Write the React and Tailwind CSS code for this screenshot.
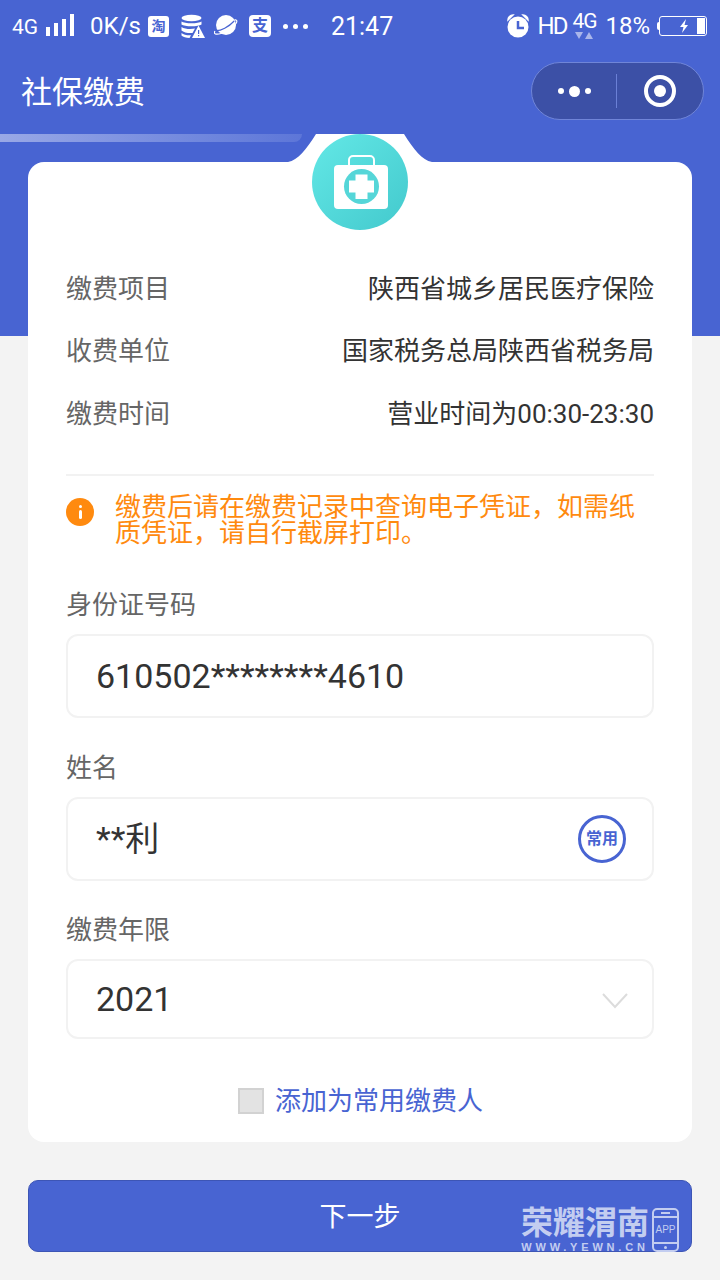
import React from 'react';

const BLUE = '#4864d2';

const StatusBar = () => (
  <div className="flex items-center h-[50px] pt-[2px] pl-[12px] pr-[13px] text-white text-[24px] font-['Roboto','Noto_Sans_CJK_SC',sans-serif] font-light">
    <span className="text-[21px] font-normal mt-[3px]">4G</span>
    <div className="flex items-end gap-[4px] h-[22px] ml-[8px] mb-[2px]">
      <span className="w-[4px] h-[9px] bg-white" />
      <span className="w-[4px] h-[13px] bg-white" />
      <span className="w-[4px] h-[17px] bg-white" />
      <span className="w-[4px] h-[22px] bg-white" />
    </div>
    <span className="ml-[16px] text-[24px] font-normal">0K/s</span>
    <div className="w-[21px] h-[21px] ml-[7px] bg-white rounded-[3px] flex items-center justify-center text-[14px] font-bold text-[#4864d2] leading-none overflow-hidden">淘</div>
    <svg className="ml-[12px]" width="24" height="24" viewBox="0 0 24 24" fill="white">
      <ellipse cx="10.5" cy="4" rx="10" ry="3.2" />
      <path d="M.5 7.5c3 2.4 17 2.4 20 0v3c-3 2.4-17 2.4-20 0zM.5 13c3 2.2 10 2.4 13.5 1.5L11.500 19c-4 .4-9-.5-11-2.500zM.5 19c2 1.800 6 2.600 9.500 2.300L8.500 24C5 24 2 23 .5 21.500z" />
      <path d="M17.500 11.500L24 24H11z" />
      <rect x="17" y="16" width="1.200" height="4" fill="#4864d2" />
      <rect x="17" y="21" width="1.200" height="1.300" fill="#4864d2" />
    </svg>
    <svg className="ml-[9px]" width="24" height="24" viewBox="0 0 24 24" fill="white">
      <circle cx="12" cy="11" r="10" />
      <path d="M1 17c-2 3 1 4 6 2.500 5-1.300 12-5.500 15-10 1.500-2.500 1-3.500-1.500-3.800" fill="none" stroke="white" strokeWidth="1.200" />
      <path d="M1.200 16.500c5 1 14-4 19-9.500" fill="none" stroke="#4864d2" strokeWidth="1.200" />
    </svg>
    <div className="w-[22px] h-[22px] ml-[11px] bg-white rounded-[4px] flex items-center justify-center text-[16px] font-bold text-[#4864d2] leading-none overflow-hidden">支</div>
    <div className="flex gap-[5px] ml-[12px]">
      <span className="w-[5px] h-[5px] rounded-full bg-white" />
      <span className="w-[5px] h-[5px] rounded-full bg-white" />
      <span className="w-[5px] h-[5px] rounded-full bg-white" />
    </div>
    <span className="ml-[23px] mt-[1px] text-[25px] font-normal">21:47</span>
    <div className="flex-1" />
    <svg width="26" height="26" viewBox="0 0 26 26" fill="white">
      <circle cx="13" cy="14" r="10.500" />
      <path d="M3 7a5 5 0 0 1 5-5zM23 7a5 5 0 0 0-5-5z" stroke="white" strokeWidth="1.500" />
      <path d="M13 8v7h6" fill="none" stroke={BLUE} strokeWidth="2.500" />
    </svg>
    <span className="ml-[7px] text-[24px] font-normal tracking-[-2px]">HD</span>
    <div className="ml-[5px] flex flex-col items-center w-[26px] mt-[-3px]">
      <span className="text-[21px] leading-[21px] font-normal tracking-[-1px]">4G</span>
      <div className="flex gap-[2px]">
        <span className="w-0 h-0 border-l-[4px] border-r-[4px] border-t-[7px] border-l-transparent border-r-transparent border-t-[#aab6ea]" />
        <span className="w-0 h-0 border-l-[4px] border-r-[4px] border-b-[7px] border-l-transparent border-r-transparent border-b-[#aab6ea]" />
      </div>
    </div>
    <span className="ml-[8px] text-[24px] font-normal">18%</span>
    <div className="ml-[7px] w-[2px] h-[8px] bg-white rounded-l-sm" />
    <div className="relative w-[48px] h-[20px] border border-white rounded-[3px]">
      <svg className="absolute left-[18px] top-[2px]" width="12" height="14" viewBox="0 0 12 14" fill="white">
        <path d="M8 0L2 8h3.500L4 14l6-8H6.500z" />
      </svg>
      <span className="absolute right-[1px] top-[1px] bottom-[1px] w-[8px] bg-white" />
    </div>
  </div>
);

const TitleBar = () => (
  <div className="flex items-center justify-between h-[84px] pl-[21px] pr-[16px]">
    <h1 className="text-white text-[31px] font-normal mt-[2px]">社保缴费</h1>
    <div className="flex items-center w-[173px] h-[58px] mb-[2px] rounded-full bg-[#3c50a6] border border-[#7085d8]">
      <div className="flex-1 flex items-center justify-center gap-[5px]">
        <span className="w-[6px] h-[6px] rounded-full bg-white" />
        <span className="w-[11px] h-[11px] rounded-full bg-white" />
        <span className="w-[6px] h-[6px] rounded-full bg-white" />
      </div>
      <span className="w-px h-[34px] bg-[#6b80d6]" />
      <div className="w-[86px] flex items-center justify-center">
        <span className="w-[32px] h-[32px] rounded-full border-[4px] border-white flex items-center justify-center">
          <span className="w-[12px] h-[12px] rounded-full bg-white" />
        </span>
      </div>
    </div>
  </div>
);

const MedicalIcon = () => (
  <svg width="96" height="96" viewBox="0 0 96 96">
    <defs>
      <linearGradient id="medGrad" x1="0" y1="0" x2="1" y2="1">
        <stop offset="0" stopColor="#63e8e6" />
        <stop offset="1" stopColor="#43c9cd" />
      </linearGradient>
    </defs>
    <circle cx="48" cy="48" r="48" fill="url(#medGrad)" />
    <path d="M37 32v-6a4 4 0 0 1 4-4h17a4 4 0 0 1 4 4v6" fill="none" stroke="white" strokeWidth="2" />
    <rect x="22" y="31" width="54" height="44" rx="4" fill="white" />
    <circle cx="49.500" cy="52.500" r="17.500" fill="#55d6d8" />
    <path d="M43.500 40.500h12v6h6.500v12h-6.500v6.500h-12v-6.500H37v-12h6.500z" fill="white" />
  </svg>
);

const InfoRow = ({ label, value }) => (
  <div className="flex items-center justify-between h-[62px]">
    <span className="text-[#666666]">{label}</span>
    <span className="text-[#333333]">{value}</span>
  </div>
);

const Field = ({ label, value, height, children }) => (
  <div>
    <div className="h-[31px] leading-[31px] text-[26px] text-[#666666]">{label}</div>
    <div className={`mt-[13px] flex items-center justify-between pl-[28px] pr-[26px] border-2 border-[#f2f2f2] rounded-[12px] text-[34px] text-[#333333] ${height}`}>
      <span>{value}</span>
      {children}
    </div>
  </div>
);

const Watermark = () => (
  <div className="absolute right-[41px] bottom-[27px] flex items-end gap-[3px] text-[#c3cdf0]">
    <div className="flex flex-col items-center">
      <span className="text-[32px] leading-[36px] font-bold">荣耀渭南</span>
      <span className="text-[11px] leading-[12px] font-bold tracking-[3.800px] font-['Liberation_Sans',sans-serif]">WWW.YEWN.CN</span>
    </div>
    <div className="w-[27px] h-[44px] mb-[1px] border-2 border-[#c3cdf0] rounded-[5px] flex flex-col items-center justify-between">
      <span className="w-full h-[8px] border-b-2 border-[#c3cdf0] flex items-center justify-center">
        <span className="w-[9px] h-[2px] bg-[#c3cdf0]" />
      </span>
      <span className="text-[10px] leading-none font-['Liberation_Sans',sans-serif]">APP</span>
      <span className="w-full h-[8px] border-t-2 border-[#c3cdf0] flex items-center justify-center">
        <span className="w-[3px] h-[3px] rounded-full bg-[#c3cdf0]" />
      </span>
    </div>
  </div>
);

export default function App() {
  return (
    <div className="relative w-[720px] h-[1280px] overflow-hidden bg-[#f3f3f3] font-['Roboto','Noto_Sans_CJK_SC',sans-serif]">
      <div className="h-[336px] bg-[#4864d2]">
        <StatusBar />
        <TitleBar />
        <div className="h-[8px] w-[302px] rounded-br-[30px] bg-gradient-to-r from-[#99a8e6] to-[#5d76d8]" />
      </div>

      <div className="relative mx-[28px] -mt-[174px] h-[980px] bg-white rounded-[16px] px-[38px]">
        <svg className="absolute left-[260px] top-[-28px]" width="144" height="28" viewBox="0 0 144 28" fill="white">
          <path d="M0 28c10-2 18-12 28-28h88c10 16 18 26 28 28z" />
        </svg>
        <div className="absolute left-[284px] top-[-28px]">
          <MedicalIcon />
        </div>

        <div className="pt-[96px] text-[26px]">
          <InfoRow label="缴费项目" value="陕西省城乡居民医疗保险" />
          <InfoRow label="收费单位" value="国家税务总局陕西省税务局" />
          <div className="pt-[1px]">
            <InfoRow label="缴费时间" value="营业时间为00:30-23:30" />
          </div>
        </div>

        <div className="mt-[29px] h-[2px] bg-[#f2f2f2]" />

        <div className="flex mt-[18px] h-[64px]">
          <div className="relative mt-[4px] w-[28px] h-[28px] shrink-0 rounded-full bg-[#ff8a0f] flex items-end justify-center pb-[7px]">
            <span className="absolute top-[7px] w-[3px] h-[3px] bg-white rounded-full" />
            <span className="w-[3px] h-[9px] bg-white rounded-sm" />
          </div>
          <p className="ml-[21px] w-[530px] text-[26px] leading-[26px] text-[#ff8a0f]">
            缴费后请在缴费记录中查询电子凭证，如需纸质凭证，请自行截屏打印。
          </p>
        </div>

        <div className="mt-[32px]">
          <Field label="身份证号码" value="610502********4610" height="h-[84px]" />
        </div>
        <div className="mt-[35px]">
          <Field label="姓名" value="**利" height="h-[84px]">
            <span className="w-[48px] h-[48px] rounded-full border-[3px] border-[#4864d2] flex items-center justify-center text-[16px] font-bold text-[#4864d2] whitespace-nowrap">常用</span>
          </Field>
        </div>
        <div className="mt-[34px]">
          <Field label="缴费年限" value="2021" height="h-[80px]">
            <svg className="mt-[4px] mr-[-2px]" width="26" height="16" viewBox="0 0 26 16" fill="none" stroke="#dcdcdc" strokeWidth="2">
              <path d="M1 1l12 13L25 1" />
            </svg>
          </Field>
        </div>

        <div className="flex items-center justify-center pl-[1px] mt-[42px]">
          <span className="w-[26px] h-[26px] bg-[#e3e3e3] border-2 border-[#d2d2d2]" />
          <span className="ml-[11px] mt-[1px] text-[26px] text-[#4864d2]">添加为常用缴费人</span>
        </div>
      </div>

      <div className="mx-[28px] mt-[38px] h-[72px] pt-[2px] rounded-[10px] bg-[#4864d2] border border-[#3d55b5] flex items-center justify-center text-white text-[27px]">
        下一步
      </div>
      <Watermark />
    </div>
  );
}
